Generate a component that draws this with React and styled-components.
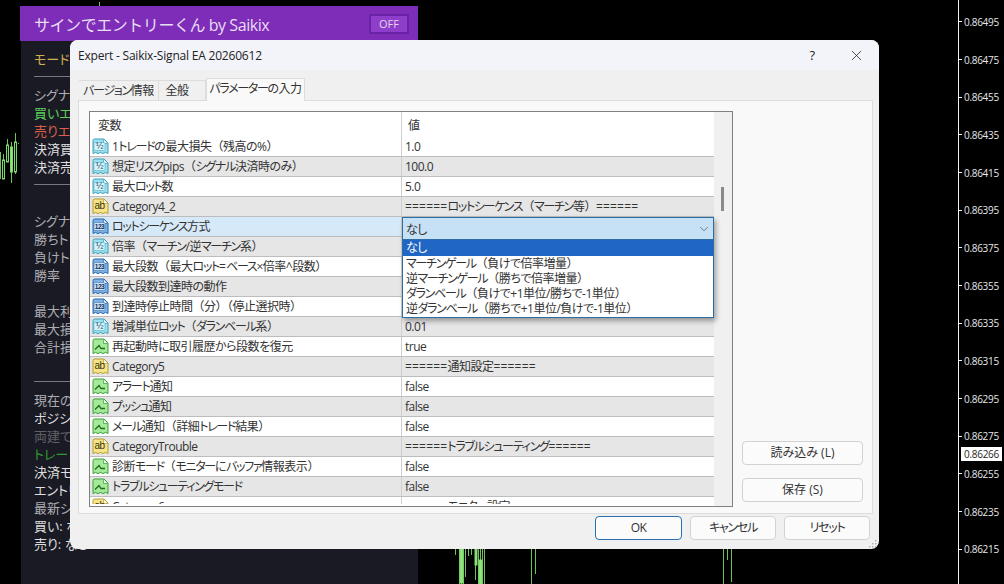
import React from 'react';
import styled, { createGlobalStyle } from 'styled-components';
import { X, ChevronDown } from 'lucide-react';

const UI_FONT = `"Open Sans", "Noto Sans CJK JP", sans-serif`;

const rows = [
  { icon: 'num', name: '1トレードの最大損失（残高の%）', value: '1.0' },
  { icon: 'num', name: '想定リスクpips（シグナル決済時のみ）', value: '100.0' },
  { icon: 'num', name: '最大ロット数', value: '5.0' },
  { icon: 'str', name: 'Category4_2', value: '======ロットシーケンス（マーチン等）======' },
  { icon: 'int', name: 'ロットシーケンス方式', value: '', active: true },
  { icon: 'num', name: '倍率（マーチン/逆マーチン系）', value: '' },
  { icon: 'int', name: '最大段数（最大ロット=ベース×倍率^段数）', value: '' },
  { icon: 'int', name: '最大段数到達時の動作', value: '' },
  { icon: 'int', name: '到達時停止時間（分）（停止選択時）', value: '' },
  { icon: 'num', name: '増減単位ロット（ダランベール系）', value: '0.01' },
  { icon: 'bool', name: '再起動時に取引履歴から段数を復元', value: 'true' },
  { icon: 'str', name: 'Category5', value: '======通知設定======' },
  { icon: 'bool', name: 'アラート通知', value: 'false' },
  { icon: 'bool', name: 'プッシュ通知', value: 'false' },
  { icon: 'bool', name: 'メール通知（詳細トレード結果）', value: 'false' },
  { icon: 'str', name: 'CategoryTrouble', value: '======トラブルシューティング======' },
  { icon: 'bool', name: '診断モード（モニターにバッファ情報表示）', value: 'false' },
  { icon: 'bool', name: 'トラブルシューティングモード', value: 'false' },
  { icon: 'str', name: 'Category6', value: '======モニター設定======' },
];

const options = [
  'なし',
  'マーチンゲール（負けで倍率増量）',
  '逆マーチンゲール（勝ちで倍率増量）',
  'ダランベール（負けで+1単位/勝ちで-1単位）',
  '逆ダランベール（勝ちで+1単位/負けで-1単位）',
];

const prices = [
  '0.86495', '0.86475', '0.86455', '0.86435', '0.86415', '0.86395', '0.86375', '0.86355',
  '0.86335', '0.86315', '0.86295', '0.86275', '0.86255', '0.86235', '0.86215',
];

const panelLines = [
  { text: 'モード: シグナル', tone: 'yellow' },
  { rule: true },
  { text: 'シグナル設定', tone: 'muted' },
  { text: '買いエントリー', tone: 'green' },
  { text: '売りエントリー', tone: 'red' },
  { text: '決済買い', tone: 'white' },
  { text: '決済売り', tone: 'white' },
  { rule: true },
  { text: '' },
  { text: 'シグナル統計', tone: 'muted' },
  { text: '勝ちトレード', tone: 'muted' },
  { text: '負けトレード', tone: 'muted' },
  { text: '勝率', tone: 'muted' },
  { text: '' },
  { text: '最大利益', tone: 'muted' },
  { text: '最大損失', tone: 'muted' },
  { text: '合計損益', tone: 'muted' },
  { text: '' },
  { rule: true, tight: true },
  { text: '現在の状態', tone: 'muted' },
  { text: 'ポジション', tone: 'white' },
  { text: '両建て', tone: 'dim' },
  { text: 'トレード', tone: 'darkgreen' },
  { text: '決済モード', tone: 'white' },
  { text: 'エントリー', tone: 'white' },
  { text: '最新シグナル', tone: 'muted' },
  { text: '買い: なし', tone: 'white' },
  { text: '売り: なし', tone: 'white' },
];

const toneColors = {
  yellow: '#d0b050',
  muted: '#aeaeb2',
  green: '#5ccf5c',
  red: '#d9604c',
  white: '#dedede',
  dim: '#606066',
  darkgreen: '#2f9a2f',
};

const iconStyles = {
  num: { fill: '#9be0ee', edge: '#3f9fbb', label: '½', color: '#15506a', size: 9, weight: 400, box: '#d8f3f9' },
  int: { fill: '#7fb2e6', edge: '#2c66a8', label: '123', color: '#0e2f5c', size: 6.5, weight: 700, box: '#cfe3f7' },
  str: { fill: '#f6e48a', edge: '#b59c30', label: 'ab', color: '#3c3408', size: 10, weight: 400 },
  bool: { fill: '#a4ea98', edge: '#3c9e3c', color: '#1e6a1e' },
};

// green candle wicks: [x, y1, y2]
const wicks = [
  [0, 152, 179], [3, 154, 165], [7, 139, 146], [11, 142, 183], [15, 133, 142], [15, 172, 174], [18, 143, 144],
  [99, 2, 7],
  [455, 549, 555], [459, 549, 584], [461, 549, 584], [463, 549, 584], [465, 549, 577], [468, 549, 556],
  [471, 549, 555], [475, 549, 580], [478, 549, 584], [480, 549, 584], [482, 549, 584], [484, 549, 584],
  [531, 549, 584], [535, 549, 574],
  [723, 549, 584], [727, 549, 560], [731, 549, 582],
];

// candle bodies: [x, y, w, h, filled]
const bodies = [
  [2.5, 160, 2, 19], [6.5, 145, 2, 17], [10.5, 147, 2, 25, true], [14.5, 142, 2, 30],
  [460, 549, 3, 34, true], [475, 549, 2, 16, true], [479, 560, 3, 24, true],
];

const Jp = ({ children }) =>
  String(children)
    .split(/([\u30A0-\u30FF]+|[（）]|=+)/)
    .filter(Boolean)
    .map((part, i) => {
      if (part === '（' || part === '）') return <Bracket key={i}>{part}</Bracket>;
      if (part[0] === '=') return <Equals key={i}>{part}</Equals>;
      if (/[\u30A0-\u30FF]/.test(part)) return <Kana key={i}>{part}</Kana>;
      return part;
    });

const FileIcon = ({ type }) => {
  const s = iconStyles[type];
  return (
    <IconSvg viewBox="0 0 17 17" aria-hidden="true">
      <path
        d="M1 2.5Q1 1 2.5 1H12L16 5V15.5L13.5 14.4L11 15.6L8.5 14.4L6 15.6L3.5 14.4L1 15.6Z"
        fill={s.fill}
        stroke={s.edge}
      />
      <path d="M11.5 1.5V5.5H15.5" fill="#f4fbfd" stroke={s.edge} strokeWidth="0.7" />
      {s.label ? (
        <>
          {s.box && <rect x="2" y="4.5" width="11" height="8" rx="1" fill={s.box} stroke={s.edge} strokeWidth="0.5" />}
          <text
            x="7.5"
            y="11.2"
            textAnchor="middle"
            fontFamily="Liberation Sans, sans-serif"
            fontSize={s.size}
            fontWeight={s.weight}
            fill={s.color}
          >
            {s.label}
          </text>
        </>
      ) : (
        <path d="M3 11.5L7 7.5L9 10.5H13" fill="none" stroke={s.color} strokeWidth="1.3" />
      )}
    </IconSvg>
  );
};

const App = () => {
  return (
    <Screen>
      <GlobalStyle />
      <ChartLayer viewBox="0 0 1004 584">
        {wicks.map(([x, y1, y2], i) => (
          <line key={i} x1={x + 0.5} x2={x + 0.5} y1={y1} y2={y2} stroke="#6fbf5c" />
        ))}
        {bodies.map(([x, y, w, h, filled], i) => (
          <rect key={i} x={x} y={y} width={w} height={h} fill={filled ? '#94e482' : '#0b1f08'} stroke="#7ed86c" strokeWidth="1" />
        ))}
      </ChartLayer>

      <PriceAxis>
        {prices.map((p) => (
          <PriceLabel key={p}>{p}</PriceLabel>
        ))}
        <CurrentPrice>0.86266</CurrentPrice>
      </PriceAxis>

      <SidePanel>
        <PanelHeader>
          <PanelTitle>サインでエントリーくん by Saikix</PanelTitle>
          <ToggleButton>OFF</ToggleButton>
        </PanelHeader>
        <PanelBody>
          {panelLines.map((line, i) =>
            line.rule ? (
              <PanelRule key={i} $tight={line.tight} />
            ) : (
              <PanelLine key={i} $tone={line.tone}>{line.text}</PanelLine>
            )
          )}
        </PanelBody>
      </SidePanel>

      <Dialog>
        <TitleBar>
          <TitleText>Expert - Saikix-Signal EA 20260612</TitleText>
          <HelpMark>?</HelpMark>
          <CloseMark>
            <X size={17} strokeWidth={1.1} />
          </CloseMark>
        </TitleBar>

        <TabStrip>
          <Tab><Jp>バージョン情報</Jp></Tab>
          <Tab $narrow>全般</Tab>
          <Tab $active><Jp>パラメーターの入力</Jp></Tab>
        </TabStrip>

        <TabPanel>
          <TableBox>
            <TableScroll>
              <HeaderRow>
                <NameCell>変数</NameCell>
                <HeaderValue>値</HeaderValue>
              </HeaderRow>
              {rows.map((row, i) => (
                <Row key={row.name} $striped={i % 2 === 1} $active={row.active}>
                  <NameCell>
                    <FileIcon type={row.icon} />
                    <CellText><Jp>{row.name}</Jp></CellText>
                  </NameCell>
                  <ValueCell><CellText><Jp>{row.value}</Jp></CellText></ValueCell>
                </Row>
              ))}
            </TableScroll>
            <Scrollbar>
              <ScrollThumb />
            </Scrollbar>
            <SelectBox>
              <SelectValue>
                <span>なし</span>
                <ChevronDown size={14} strokeWidth={1} color="#333" />
              </SelectValue>
              <OptionList>
                {options.map((opt, i) => (
                  <Option key={opt} $selected={i === 0}><Jp>{opt}</Jp></Option>
                ))}
              </OptionList>
            </SelectBox>
          </TableBox>

          <SideButtons>
            <SideButton>読み込み (L)</SideButton>
            <SideButton>保存 (S)</SideButton>
          </SideButtons>
        </TabPanel>

        <Footer>
          <FooterButton $primary>OK</FooterButton>
          <FooterButton><Jp>キャンセル</Jp></FooterButton>
          <FooterButton><Jp>リセット</Jp></FooterButton>
        </Footer>

        <ResizeGrip viewBox="0 0 8 8">
          <rect x="6" y="0" width="1.4" height="1.4" />
          <rect x="3" y="3" width="1.4" height="1.4" />
          <rect x="6" y="3" width="1.4" height="1.4" />
          <rect x="0" y="6" width="1.4" height="1.4" />
          <rect x="3" y="6" width="1.4" height="1.4" />
          <rect x="6" y="6" width="1.4" height="1.4" />
        </ResizeGrip>
      </Dialog>
    </Screen>
  );
};

export default App;

const GlobalStyle = createGlobalStyle`
  html, body {
    margin: 0;
    padding: 0;
    background: #000;
    overflow: hidden;
  }
  * {
    box-sizing: border-box;
  }
`;

const Screen = styled.div`
  position: relative;
  width: 1004px;
  height: 584px;
  overflow: hidden;
  background: #000;
  font-family: ${UI_FONT};
`;

const ChartLayer = styled.svg`
  position: absolute;
  left: 0;
  top: 0;
  width: 1004px;
  height: 584px;
`;

const PriceAxis = styled.div`
  position: absolute;
  left: 958px;
  top: 0;
  bottom: 0;
  width: 46px;
  padding-top: 3px;
  border-left: 1px solid #f2f2f2;
  display: flex;
  flex-direction: column;
`;

const PriceLabel = styled.div`
  height: 37.68px;
  display: flex;
  align-items: center;
  padding-left: 5px;
  font-size: 10px;
  letter-spacing: -0.3px;
  color: #e8e8e8;
  &::before {
    content: '';
    position: absolute;
    left: 0;
    width: 3px;
    height: 1px;
    background: #f2f2f2;
  }
`;

const CurrentPrice = styled.div`
  position: absolute;
  left: 2px;
  top: 447px;
  width: 41px;
  height: 14px;
  background: #fff;
  color: #222;
  font-size: 10px;
  letter-spacing: -0.3px;
  line-height: 14px;
  text-align: center;
`;

const SidePanel = styled.div`
  position: absolute;
  left: 20px;
  top: 6px;
  width: 398px;
  height: 578px;
  display: flex;
  flex-direction: column;
`;

const PanelHeader = styled.div`
  height: 35px;
  padding: 0 9px 0 14px;
  display: flex;
  align-items: center;
  justify-content: space-between;
  background: #7e2db9;
`;

const PanelTitle = styled.div`
  font-size: 16px;
  color: #e9def2;
  letter-spacing: -0.45px;
`;

const ToggleButton = styled.div`
  width: 40px;
  height: 20px;
  margin-top: 1px;
  border: 2px solid #6a22a6;
  background: #8f3ecb;
  color: #e2d6ec;
  font-size: 11px;
  line-height: 16px;
  text-align: center;
`;

const PanelBody = styled.div`
  flex: 1;
  margin-left: 1px;
  padding: 9px 13px;
  background: #1a1a24;
  display: flex;
  flex-direction: column;
  font-feature-settings: "palt";
`;

const PanelLine = styled.div`
  height: 18px;
  font-size: 13px;
  line-height: 18px;
  white-space: nowrap;
  color: ${(p) => toneColors[p.$tone] || '#ccc'};
`;

const PanelRule = styled.div`
  height: 1px;
  margin: ${(p) => (p.$tight ? '7px 0 9px' : '8px 0 9px')};
  background: #77777c;
`;

const Dialog = styled.div`
  position: absolute;
  left: 70px;
  top: 40px;
  width: 809px;
  height: 509px;
  border-radius: 8px;
  background: #f0f0f0;
  overflow: hidden;
  display: flex;
  flex-direction: column;
  font-size: 12px;
  letter-spacing: -0.5px;
  color: #333;
  font-feature-settings: "palt";
`;

const Kana = styled.span`
  letter-spacing: -1.3px;
`;

const Bracket = styled.span`
  font-feature-settings: normal;
  letter-spacing: -0.5px;
`;

const Equals = styled.span`
  letter-spacing: 0.2px;
`;

const TitleBar = styled.div`
  height: 30px;
  flex: none;
  padding: 0 14px 0 8px;
  display: flex;
  align-items: center;
  background: #f3f4f9;
  color: #222;
`;

const TitleText = styled.div`
  flex: 1;
  font-size: 12px;
  letter-spacing: -0.2px;
`;

const HelpMark = styled.div`
  width: 20px;
  margin-right: 26px;
  font-size: 13px;
  text-align: center;
`;

const CloseMark = styled.div`
  display: flex;
  color: #222;
`;

const TabStrip = styled.div`
  height: 30px;
  flex: none;
  padding-left: 9px;
  display: flex;
  align-items: flex-end;
`;

const Tab = styled.div`
  width: ${(p) => (p.$active ? '99px' : p.$narrow ? '47px' : '80px')};
  height: ${(p) => (p.$active ? '23px' : '20px')};
  padding-right: ${(p) => (p.$narrow ? '10px' : '0')};
  border: 1px solid #dcdcdc;
  border-bottom: none;
  border-left: ${(p) => (p.$active ? '1px solid #dcdcdc' : 'none')};
  background: ${(p) => (p.$active ? '#f9f9f9' : '#f0f0f0')};
  margin-bottom: ${(p) => (p.$active ? '-1px' : '0')};
  position: relative;
  z-index: 1;
  font-size: 12px;
  line-height: 20px;
  text-align: center;
  color: #333;
  white-space: nowrap;
`;

const TabPanel = styled.div`
  height: 414px;
  flex: none;
  margin: 0 6px 0 8px;
  padding: 10px;
  border: 1px solid #dcdcdc;
  background: #f9f9f9;
  display: flex;
  gap: 9px;
`;

const TableBox = styled.div`
  position: relative;
  width: 644px;
  height: 396px;
  flex: none;
  border: 1px solid #808080;
  background: #fff;
  display: flex;
`;

const TableScroll = styled.div`
  width: 624px;
  height: 392px;
  overflow: hidden;
  display: flex;
  flex-direction: column;
`;

const HeaderRow = styled.div`
  height: 25px;
  flex: none;
  display: flex;
  align-items: center;
`;

const Row = styled.div`
  height: 20px;
  flex: none;
  display: flex;
  align-items: center;
  border-bottom: 1px solid #bdbdbd;
  background: ${(p) => (p.$active ? '#d6e9f9' : p.$striped ? '#e6e6e6' : '#fff')};
`;

const NameCell = styled.div`
  width: 312px;
  height: 100%;
  flex: none;
  padding-left: 2px;
  display: flex;
  align-items: center;
  gap: 3px;
  border-right: 1px solid #cfcfcf;
  white-space: nowrap;
  overflow: hidden;
  ${HeaderRow} & {
    padding-left: 8px;
  }
`;

const CellText = styled.span`
  display: block;
  margin-top: -1px;
`;

const HeaderValue = styled.div`
  padding-left: 6px;
`;

const ValueCell = styled.div`
  padding-left: 3px;
  white-space: nowrap;
`;

const IconSvg = styled.svg`
  width: 17px;
  height: 17px;
  flex: none;
`;

const Scrollbar = styled.div`
  position: relative;
  flex: 1;
  background: #f0f0f0;
`;

const ScrollThumb = styled.div`
  position: absolute;
  left: 7px;
  top: 75px;
  width: 3px;
  height: 24px;
  background: #8a8a8a;
`;

const SelectBox = styled.div`
  position: absolute;
  left: 312px;
  top: 105px;
  width: 312px;
  box-shadow: 2px 3px 5px rgba(0, 0, 0, 0.35);
`;

const SelectValue = styled.div`
  height: 23px;
  padding: 0 2px 0 3px;
  display: flex;
  align-items: center;
  justify-content: space-between;
  background: #c6e0f5;
  border: 1px solid #2c6da6;
`;

const OptionList = styled.div`
  height: 78px;
  background: #fff;
  border: 1px solid #2c6da6;
  border-top: none;
  display: flex;
  flex-direction: column;
`;

const Option = styled.div`
  height: ${(p) => (p.$selected ? '16px' : '15px')};
  padding-left: 3px;
  line-height: 15px;
  white-space: nowrap;
  background: ${(p) => (p.$selected ? '#2066c4' : 'transparent')};
  color: ${(p) => (p.$selected ? '#fff' : '#333')};
`;

const SideButtons = styled.div`
  width: 121px;
  flex: none;
  display: flex;
  flex-direction: column;
  justify-content: flex-end;
  gap: 13px;
  padding-bottom: 1px;
`;

const SideButton = styled.div`
  height: 24px;
  border: 1px solid #d2d2d2;
  border-radius: 4px;
  background: #fbfbfb;
  font-size: 12px;
  letter-spacing: 0;
  line-height: 22px;
  text-align: center;
  color: #333;
`;

const Footer = styled.div`
  flex: 1;
  padding: 2px 9px 0 0;
  display: flex;
  justify-content: flex-end;
  gap: 8px;
`;

const FooterButton = styled.div`
  width: ${(p) => (p.$primary ? '87px' : '86px')};
  height: 24px;
  border: ${(p) => (p.$primary ? '1.5px solid #2a6fb0' : '1px solid #d2d2d2')};
  border-radius: 4px;
  background: #fbfbfb;
  font-size: 12px;
  line-height: 21px;
  text-align: center;
  color: #333;
`;

const ResizeGrip = styled.svg`
  position: absolute;
  right: 2px;
  bottom: 1px;
  width: 8px;
  height: 8px;
  fill: #a8a8a8;
`;
